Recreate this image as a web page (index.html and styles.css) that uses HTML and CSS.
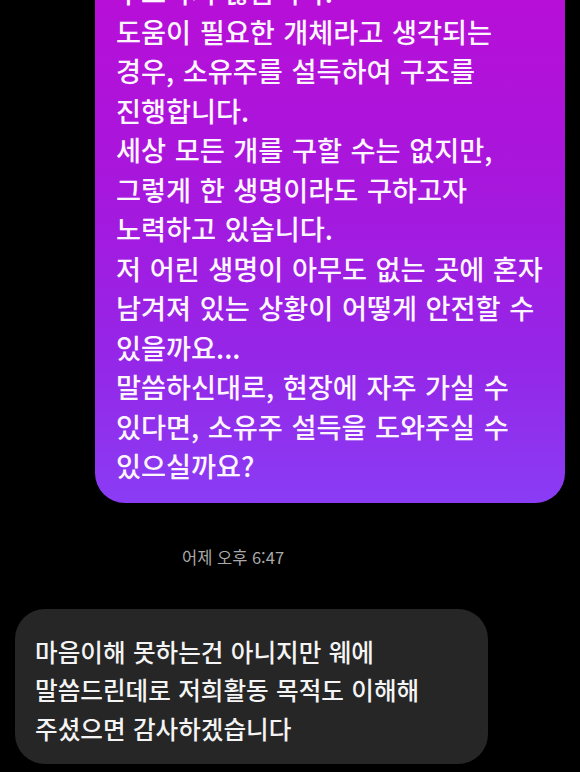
FILE: index.html
```html
<!DOCTYPE html>
<html lang="ko">
<head>
<meta charset="utf-8">
<title>DM</title>
<link rel="stylesheet" href="styles.css">
</head>
<body>
<main class="thread">
  <div class="row row-sent">
    <div class="bubble bubble-sent">구조하지 않습니다.<br>도움이 필요한 개체라고 생각되는<br>경우, 소유주를 설득하여 구조를<br>진행합니다.<br>세상 모든 개를 구할 수는 없지만,<br>그렇게 한 생명이라도 구하고자<br>노력하고 있습니다.<br>저 어린 생명이 아무도 없는 곳에 혼자<br>남겨져 있는 상황이 어떻게 안전할 수<br>있을까요...<br>말씀하신대로, 현장에 자주 가실 수<br>있다면, 소유주 설득을 도와주실 수<br>있으실까요?</div>
  </div>
  <div class="timestamp">어제 오후 6:47</div>
  <div class="row row-received">
    <div class="bubble bubble-received">마음이해 못하는건 아니지만 웨에<br>말씀드린데로 저희활동 목적도 이해해<br>주셨으면 감사하겠습니다</div>
  </div>
</main>
</body>
</html>
```

FILE: styles.css
```css
html, body {
  margin: 0;
  padding: 0;
  background: #000;
}

body {
  width: 580px;
  height: 772px;
  overflow: hidden;
  font-family: "Noto Sans CJK KR", "Noto Sans", sans-serif;
  color: #fff;
}

.thread {
  display: flex;
  flex-direction: column;
}

.row {
  display: flex;
}

.row-sent {
  justify-content: flex-end;
  padding-right: 15px;
  margin-top: -46px;
}

.row-received {
  justify-content: flex-start;
  padding-left: 15px;
  margin-top: 42px;
}

.bubble {
  white-space: nowrap;
  border-radius: 30px;
  box-sizing: border-box;
  font-weight: 500;
}

.bubble-sent {
  width: 470px;
  padding: 18px 14px 17px 21px;
  font-size: 27.2px;
  line-height: 39.5px;
  word-spacing: 1px;
  background: linear-gradient(180deg, #bb0dd6 0%, #a816dc 40%, #9427e8 75%, #8a3cf4 100%);
  color: #fdf6ff;
}

.bubble-received {
  width: 473px;
  padding: 23px 14px 17px 20px;
  font-size: 24.6px;
  line-height: 38.5px;
  word-spacing: 0.5px;
  background: #262626;
  color: #f4f4f4;
}

.timestamp {
  margin-top: 44px;
  padding-left: 182px;
  font-size: 16.5px;
  line-height: 20px;
  color: #a9a9a9;
}
```
